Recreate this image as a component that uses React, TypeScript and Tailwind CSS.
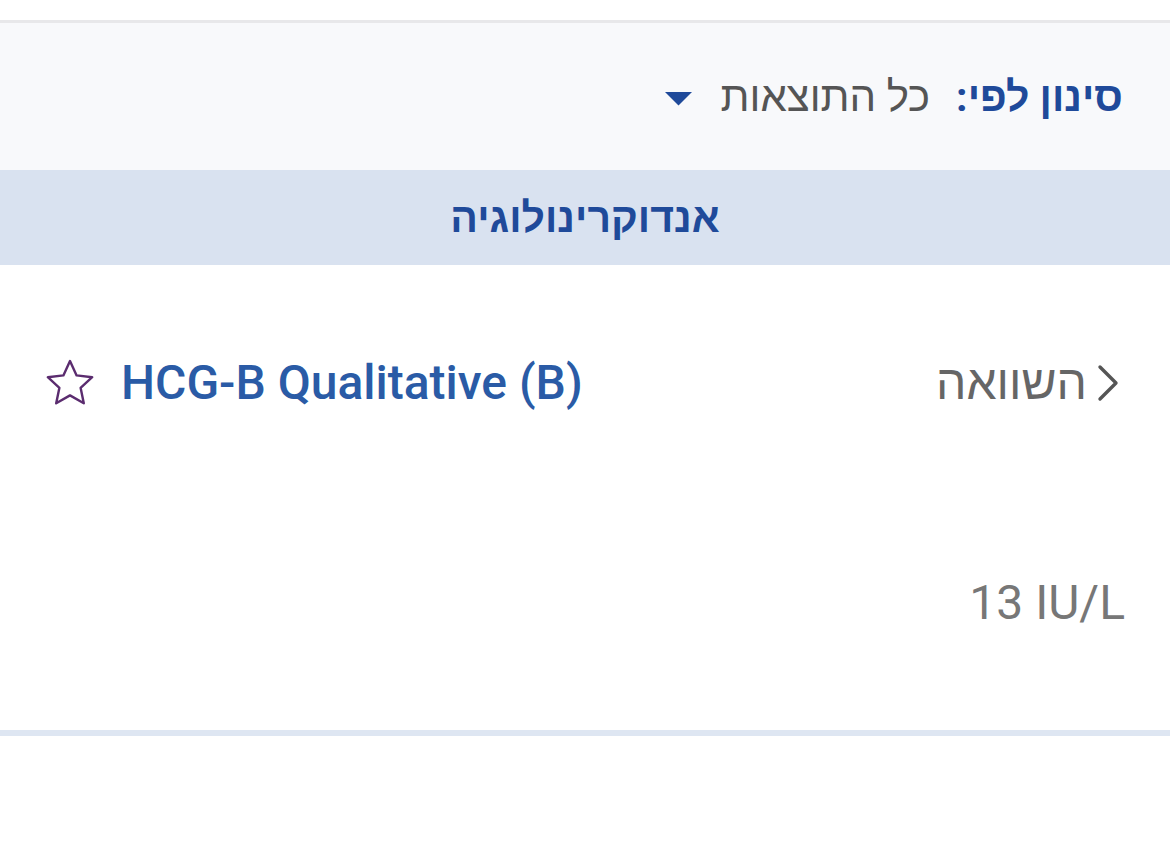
import React from 'react'

const FONT = "Roboto, 'Noto Sans', 'Liberation Sans', 'DejaVu Sans', sans-serif"

function StarIcon() {
    return (
        <svg width="50" height="48" viewBox="0 0 50 48" fill="none" stroke="#5b2c6f" strokeWidth="2.4" strokeLinejoin="round">
            <path d="M25 2l6.6 14.4 15.6 1.8-11.6 10.6 3.2 15.5L25 36.4l-13.8 7.9 3.2-15.5L2.8 18.2l15.6-1.8z" />
        </svg>
    )
}

export default function App() {
    return (
        <div dir="rtl" className="w-[1170px] h-[846px] bg-white overflow-hidden" style={{ fontFamily: FONT }}>
            <div className="h-[20px] bg-white" />
            <div className="h-[3px] bg-[#e8e8ea]" />

            {/* Filter */}
            <div className="h-[147px] bg-[#f8f9fb] flex items-center pr-[47px]">
                <span className="text-[41px] leading-[50px] font-bold text-[#1f4a9a]">סינון לפי:</span>
                <span className="text-[42px] leading-[50px] text-[#555] mr-[26px]">כל התוצאות</span>
                <svg className="mr-[28px] mt-[4px]" width="27" height="14" viewBox="0 0 27 14">
                    <path d="M0 0h27L13.5 13.5z" fill="#1f4a9a" />
                </svg>
            </div>

            {/* Category header */}
            <div className="h-[95px] bg-[#d9e2f0] flex items-center justify-center">
                <span className="text-[41px] leading-[50px] font-bold text-[#1f4a9a]">אנדוקרינולוגיה</span>
            </div>

            {/* Result row */}
            <div className="h-[465px] flex flex-col pl-[45px] pr-[45px]">
                <div className="flex items-center justify-between mt-[90px] h-[56px]">
                    <div className="flex items-center text-[#666]">
                        <svg className="mr-[6px]" width="22" height="38" viewBox="0 0 22 38" fill="none" stroke="#555" strokeWidth="3.4" strokeLinecap="round" strokeLinejoin="round">
                            <path d="M3 3l16 16-16 16" />
                        </svg>
                        <span className="text-[48px] leading-[56px] mr-[10px]">השוואה</span>
                    </div>
                    <div className="flex items-center gap-[26px]">
                        <span dir="ltr" className="text-[48px] leading-[56px] font-medium text-[#2a5ba6]">HCG-B Qualitative (B)</span>
                        <StarIcon />
                    </div>
                </div>
                <div dir="ltr" className="mt-[164px] text-[48px] leading-[56px] text-[#777] text-right">13 IU/L</div>
            </div>

            <div className="h-[6px] bg-[#dee6f2]" />
        </div>
    )
}
